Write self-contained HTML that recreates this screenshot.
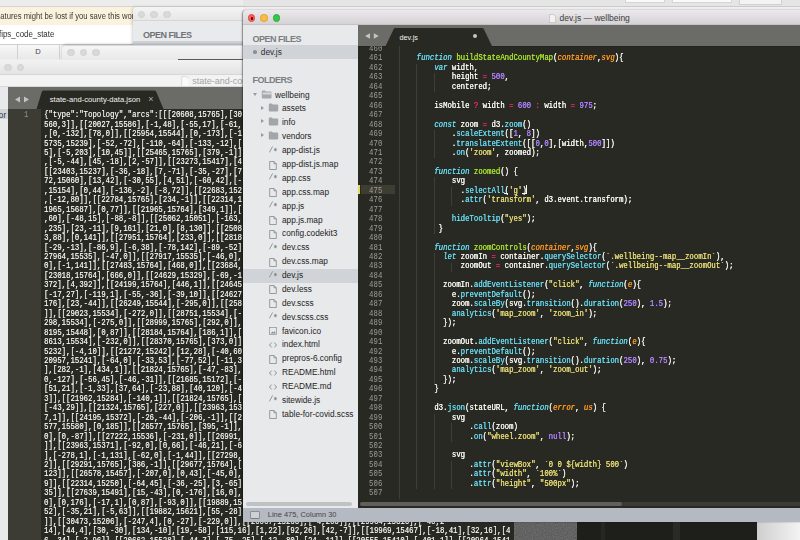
<!DOCTYPE html>
<html><head><meta charset="utf-8">
<style>
*{margin:0;padding:0;box-sizing:border-box}
html,body{width:800px;height:540px;overflow:hidden;background:#2b2b2b;position:relative;font-family:"Liberation Sans",sans-serif}
.abs{position:absolute}
.mono{font-family:"Liberation Mono",monospace}
pre{font-family:"Liberation Mono",monospace;white-space:pre;margin:0}
.tl{position:absolute;width:7.5px;height:7.5px;border-radius:50%}
.tl.g{background:#d9d9d9;border:0.5px solid #d0d0d0}
/* spreadsheet */
#ss{left:0;top:0;width:243px;height:62px;background:#ececec}
/* main window */
#main{left:243px;top:10px;width:560px;height:511.7px;background:#e7e8ea;border-radius:4px 0 0 0;overflow:hidden;box-shadow:-0.8px 0 1.5px rgba(0,0,0,0.45)}
#mtitle{left:0;top:0;width:560px;height:15px;background:linear-gradient(#ebe9eb,#d5d3d5);border-bottom:0.5px solid #c4c2c4}
#sidebar{left:0;top:15px;width:115px;height:483px;background:#e8e9eb;overflow:hidden}
.shead{position:absolute;font-weight:bold;font-size:9px;letter-spacing:-0.5px;color:#7b7d80}
.srow{position:absolute;left:0;width:115px;height:14px}
.srow.sel{background:#d0d3d8}
.sname{position:absolute;top:1.5px;font-size:8.3px;color:#232323;white-space:nowrap}
.icw{position:absolute;top:3px}
.ic{display:block}
.icj{position:absolute;left:0;top:-1.5px;font-family:"Liberation Sans",sans-serif;font-size:7.5px;line-height:8px;color:#6d6f72;white-space:nowrap;letter-spacing:-0.3px}
.tri{position:absolute;top:4.5px;width:0;height:0}
.tri.down{top:5.1px;border-left:2.3px solid transparent;border-right:2.3px solid transparent;border-top:3.2px solid #98999c}
.tri.right{top:3.6px;border-top:2.1px solid transparent;border-bottom:2.1px solid transparent;border-left:3.2px solid #98999c}
#editor{left:115px;top:15px;width:445px;height:483px;background:#282923;overflow:hidden}
#tabbar{left:0;top:0;width:445px;height:20.6px;background:#6b6c67}
#gutter{position:absolute;left:0;top:0;width:24.5px;text-align:right;color:#9d9e98;font-size:8.8px;line-height:9.457px;transform:scaleX(0.8333);transform-origin:100% 0}
#code{position:absolute;left:40.5px;top:0;color:#f8f8f2;text-shadow:0.25px 0 0 currentColor;font-size:8.8px;line-height:9.457px;transform:scaleX(0.8333);transform-origin:0 0}
.guide{position:absolute;width:0.8px;background:#3f3f39}
.k{color:#66d9ef;font-style:italic}
.f{color:#a6e22e}
.p{color:#fd971f;font-style:italic}
.o{color:#f92672}
.n{color:#ae81ff}
.s{color:#e6db74}
.m{color:#66d9ef}
#status{left:0;top:498px;width:560px;height:13.7px;background:#b5b9c1}
/* json window */
#w4{left:0;top:60px;width:513.5px;height:480px;background:#282923;overflow:hidden}
#json{position:absolute;left:44px;top:0;color:#f8f8f2;text-shadow:0.25px 0 0 rgba(248,248,242,0.6);font-size:8.8px;line-height:9.457px;transform:scaleX(0.8333);transform-origin:0 0}
</style></head><body>

<!-- top strip -->
<div class="abs" style="left:0;top:0;width:800px;height:6.5px;background:#e5e5e5;border-bottom:0.7px solid #cacaca"></div>
<div class="abs" style="left:0;top:7px;width:800px;height:4px;background:#efefef"></div>
<div class="abs" style="left:625px;top:0;width:40px;height:2.8px;background:#fafafa;border:0.5px solid #d5d5d5;border-top:0"></div>
<div class="abs" style="left:672px;top:0;width:60px;height:2.8px;background:#fafafa;border:0.5px solid #d5d5d5;border-top:0"></div>
<div class="abs" style="left:739px;top:0;width:43px;height:4.5px;background:#f3f3f3;border:0.5px solid #d0d0d0;border-top:0"></div>
<!-- desktop bottom right -->
<div class="abs" style="left:510px;top:521px;width:290px;height:19px;background:#1e1f1b"></div>
<svg class="abs" style="left:510px;top:521px" width="67" height="19"><filter id="nz"><feTurbulence type="fractalNoise" baseFrequency="0.9" numOctaves="2" seed="3"/><feColorMatrix type="matrix" values="0 0 0 0 0.33  0 0 0 0 0.33  0 0 0 0 0.33  0 0 0 0.5 0"/></filter><rect width="67" height="19" fill="#505050"/><rect width="67" height="19" filter="url(#nz)"/></svg>
<div class="abs" style="left:673px;top:521px;width:7px;height:19px;background:#2a2b27"></div>
<div class="abs" style="left:601px;top:521px;width:4px;height:19px;background:#262622"></div>
<div class="abs" style="left:757px;top:521px;width:43px;height:19px;background:linear-gradient(90deg,#cfcfcf,#f3f3f3)"></div>

<!-- spreadsheet -->
<div id="ss" class="abs">
  <div class="abs" style="left:0;top:0;width:243px;height:6.5px;background:#ececec;border-bottom:0.6px solid #d4d4d4"></div>
  <div class="abs" style="left:0;top:7px;width:243px;height:18px;background:#fbf2dd"></div>
  <div class="abs" style="left:-4px;top:11.3px;font-size:8.4px;color:#3a3833;white-space:nowrap;transform:scaleX(0.915);transform-origin:0 0">eatures might be lost if you save this wor</div>
  <div class="abs" style="left:0;top:25px;width:243px;height:19.5px;background:#ffffff;border-bottom:0.6px solid #cfcfcf"></div>
  <div class="abs" style="left:-1.3px;top:29.3px;font-size:9.3px;color:#303030;white-space:nowrap;transform:scaleX(0.85);transform-origin:0 0">fips_code_state</div>
  <div class="abs" style="left:0;top:45px;width:243px;height:14px;background:linear-gradient(#f7f7f7,#e9e9e9)"></div>
  <div class="abs" style="left:17.3px;top:45px;width:0.6px;height:14px;background:#d0d0d0"></div>
  <div class="abs" style="left:58.5px;top:45px;width:0.6px;height:14px;background:#d0d0d0"></div>
  <div class="abs" style="left:35.3px;top:46.9px;font-size:7.6px;color:#454545">D</div>
</div>

<!-- window 2 -->
<div class="abs" style="left:133px;top:7px;width:112px;height:40px;background:#e9eaec;border-radius:4px 0 0 0;overflow:hidden;box-shadow:-1px 0 3px rgba(0,0,0,0.18)">
  <div class="abs" style="left:0;top:0;width:112px;height:14px;background:linear-gradient(#f4f4f4,#e7e7e7);border-bottom:0.5px solid #d6d6d6"></div>
  <div class="tl g" style="left:4.7px;top:3.7px"></div>
  <div class="tl g" style="left:17.2px;top:3.7px"></div>
  <div class="tl g" style="left:30.2px;top:3.7px"></div>
  <div class="shead" style="left:10px;top:22.7px;color:#707275">OPEN FILES</div>
  <div class="abs" style="left:0;top:34px;width:112px;height:5px;background:#cfd2d7"></div>
</div>

<!-- window 3 -->
<div class="abs" style="left:62px;top:45px;width:183px;height:16px;background:linear-gradient(#f5f5f5,#e8e8e8);border-radius:4px 0 0 0;border-top:0.5px solid #d8d8d8;box-shadow:0 -1px 2.5px rgba(0,0,0,0.2)">
  <div class="tl g" style="left:5.1px;top:2.6px"></div>
  <div class="tl g" style="left:17.8px;top:2.6px"></div>
  <div class="tl g" style="left:30.2px;top:2.6px"></div>
</div>
<div class="abs" style="left:178px;top:58.8px;width:67px;height:1.2px;background:#5a5a58"></div>

<!-- window 4 json -->
<div id="w4" class="abs">
  <div class="abs" style="left:0;top:0;width:520px;height:13.5px;background:linear-gradient(#f2f2f2,#e4e4e4)"></div>
  <div class="tl g" style="left:4.2px;top:3.5px"></div>
  <div class="tl g" style="left:16.7px;top:3.5px"></div>
  <div class="abs" style="left:0;top:13.5px;width:520px;height:13.5px;background:#f3f3f3;border-top:0.6px solid #d6d6d6;border-bottom:0.5px solid #d8d8d8"></div>
  <svg class="abs" style="left:180.5px;top:16px" width="8" height="10" viewBox="0 0 7 9"><path d="M0.5 0.5h4.5l2.5 2.5v6.5h-7z" fill="#fafafa" stroke="#cfcfcf" stroke-width="0.6"/></svg>
  <div class="abs" style="left:192.2px;top:16px;font-size:9px;color:#a3a3a3;white-space:nowrap">state-and-county-data.json</div>
  <div class="abs" style="left:0;top:27px;width:8px;height:453px;background:#e8e9eb"></div>
  <div class="abs" style="left:0;top:48.5px;width:8px;height:10px;background:#d0d3d8"></div>
  <div class="abs" style="left:-1.2px;top:50px;font-size:8.3px;color:#333">or</div>
  <div class="abs" style="left:8px;top:27px;width:512px;height:21.5px;background:#6b6c67"></div>
  <svg class="abs" style="left:8px;top:27px" width="200" height="22"><path d="M28.5 22 L34 4.2 Q34.6 3.6 35.6 3.6 L146.4 3.6 Q147.4 3.6 148 4.2 L155.5 22 Z" fill="#282923"/></svg>
  <svg class="abs" style="left:14.8px;top:35.6px" width="15" height="7" viewBox="0 0 15 7"><path d="M0 3.5L5 0.4V6.6Z M14 3.5L9 0.4V6.6Z" fill="#c3c3bf"/></svg>
  <div class="abs" style="left:49.8px;top:35.2px;font-size:7.65px;color:#f2f2ee;white-space:nowrap">state-and-county-data.json</div>
  <div class="abs" style="left:148.3px;top:34px;font-size:9px;color:#b0b0ad">&#215;</div>
  <div class="abs" style="left:8px;top:48.5px;width:33px;height:433px;background:#3c3b34"></div>
  <pre class="abs" style="left:23.5px;top:51.2px;font-size:8.8px;line-height:9.457px;color:#8f908a;transform:scaleX(0.8333);transform-origin:0 0">1</pre>
  <pre id="json" style="top:51.2px">{&quot;type&quot;:&quot;Topology&quot;,&quot;arcs&quot;:[[[20608,15765],[30
560,3]],[[20027,15586],[-1,48],[-55,17],[-61,
,[0,-132],[78,0]],[[25954,15544],[0,-173],[-1
5735,15239],[-52,-72],[-110,-64],[-133,-12],[
5],[-5,203],[10,45]],[[25465,15765],[379,-1]]
,[-5,-44],[45,-18],[2,-57]],[[23273,15417],[4
[[23403,15237],[-36,-18],[7,-71],[-35,-27],[7
72,15060],[13,42],[-30,55],[4,51],[-60,42],[-
,15154],[0,44],[-136,-2],[-8,72]],[[22683,152
,[-12,80]],[[22784,15765],[234,-1]],[[22314,1
1965,15687],[0,77]],[[21965,15764],[349,1]],[
,60],[-48,15],[-88,-8]],[[25062,15051],[-163,
,235],[23,-11],[9,161],[21,0],[8,130]],[[2508
3,88],[0,141]],[[27951,15764],[233,0]],[[2818
[-29,-13],[-86,9],[-6,38],[-78,142],[-89,-52]
27964,15535],[-47,0]],[[27917,15535],[-46,0],
0],[-1,141]],[[27483,15764],[468,0]],[[23684,
[23018,15764],[666,0]],[[24629,15329],[-69,-1
372],[4,392]],[[24199,15764],[446,1]],[[24645
[-17,27],[-119,1],[-55,-36],[-39,10]],[[24627
176],[23,-44]],[[26249,15544],[-295,0]],[[258
]],[[29023,15534],[-272,0]],[[28751,15534],[-
298,15534],[-275,0]],[[28999,15765],[292,0]],
8195,15448],[0,87]],[[28184,15764],[186,1]],[
8613,15534],[-232,0]],[[28370,15765],[373,0]]
5232],[-4,10]],[[21272,15242],[12,28],[-40,60
20957,15241],[-64,0],[-33,53],[-77,52],[-11,3
],[282,-1],[434,1]],[[21824,15765],[-47,-83],
0,-127],[-56,45],[-46,-31]],[[21685,15172],[-
[51,21],[-1,33],[37,64],[-23,88],[40,120],[-4
3]],[[21962,15284],[-140,1]],[[21824,15765],[
[-43,29]],[[21324,15765],[227,0]],[[23963,153
7,1]],[[24195,15372],[-26,-44],[-206,-1]],[[2
577,15580],[0,185]],[[26577,15765],[395,-1]],
0],[0,-87]],[[27222,15536],[-231,0]],[[26991,
]],[[23963,15371],[-92,0],[0,66],[-46,21],[-6
],[-278,1],[-1,131],[-62,0],[-1,44]],[[27298,
2]],[[29291,15765],[386,-1]],[[29677,15764],[
123]],[[26578,15457],[-207,0],[0,43],[-45,0],
9]],[[22314,15250],[-64,45],[-36,-25],[3,-65]
35]],[[27639,15491],[15,-43],[0,-176],[16,0],
0],[0,176],[-17,1],[0,87],[-93,0]],[[19889,15
52],[-35,21],[-5,63]],[[19882,15621],[55,-28]
]],[[30473,15206],[-247,4],[0,-27],[-229,0]],[[20067,15263],[-4,203]],[[29964,15316],[-40,2
14],[44,4],[30,-30],[134,-10],[19,-58],[115,16],[1,22],[92,26],[42,-7]],[[19969,15467],[-18,41],[32,16],[4
6,-34],[-2,96]],[[20662,15528],[-44,7],[-75,-25],[-12,-80],[24,-11]],[[20555,15410],[-401,1]],[[20964,1541</pre>
</div>

<!-- main window -->
<div id="main" class="abs">
  <div id="mtitle" class="abs">
    <div class="tl" style="left:4.6px;top:4.2px;background:#fc605c;border:0.5px solid #e0443e"><div style="position:absolute;left:2.3px;top:2.3px;width:2.2px;height:2.2px;border-radius:50%;background:#4d0000"></div></div>
    <div class="tl" style="left:17.1px;top:4.2px;background:#fdbc40;border:0.5px solid #dea236"></div>
    <div class="tl" style="left:29.9px;top:4.2px;background:#34c84a;border:0.5px solid #27aa35"></div>
    <svg class="abs" style="left:306px;top:3.5px" width="7" height="9" viewBox="0 0 7 9"><path d="M0.5 0.5h4l2 2v6h-6z" fill="#f2f2f2" stroke="#b8b8b8" stroke-width="0.6"/></svg>
    <div class="abs" style="left:316.6px;top:2.8px;font-size:8.5px;color:#3a3a3a;white-space:nowrap">dev.js — wellbeing</div>
  </div>
  <div id="sidebar" class="abs">
    <div class="shead" style="left:9.6px;top:8.7px">OPEN FILES</div>
    <div class="abs" style="left:0;top:20px;width:115px;height:13.9px;background:#d0d3d8"></div>
    <div class="abs" style="left:10.2px;top:25.3px;width:3.7px;height:3.7px;border-radius:50%;background:#8e8f92"></div>
    <div class="abs" style="left:17.8px;top:22px;font-size:8.3px;color:#2d2d2d">dev.js</div>
    <div class="shead" style="left:9.6px;top:50px">FOLDERS</div>
    <div class="abs" style="left:0;top:0;width:115px;height:483px">
<div class="srow" style="top:63.10px"><span class="tri down" style="left:9.8px"></span><span class="icw" style="left:18px"><svg class="ic" style="margin-top:-0.9px;margin-left:-0.5px" width="12" height="9" viewBox="0 0 12 9"><path d="M0.8 1.4Q0.8 0.5 1.8 0.5H4L5 1.5H9.6Q10.5 1.5 10.5 2.4V7.4Q10.5 8.4 9.5 8.4H1.8Q0.8 8.4 0.8 7.4Z" fill="#a6a8ab"/><path d="M1.6 2.6H9.8L11.2 3.8L10.2 4.6H1.6Z" fill="#d6d7d9"/></svg></span><span class="sname" style="left:32px">wellbeing</span></div>
<div class="srow" style="top:76.98px"><span class="tri right" style="left:17.8px"></span><span class="icw" style="left:26px"><svg class="ic" style="margin-top:-1.6px;margin-left:-1px" width="11" height="9" viewBox="0 0 11 9"><path d="M0.8 1.6Q0.8 0.6 1.8 0.6H3.8L4.8 1.6H9.2Q10.2 1.6 10.2 2.6V7.6Q10.2 8.6 9.2 8.6H1.8Q0.8 8.6 0.8 7.6Z" fill="#a3a5a8"/></svg></span><span class="sname" style="left:39px">assets</span></div>
<div class="srow" style="top:90.86px"><span class="tri right" style="left:17.8px"></span><span class="icw" style="left:26px"><svg class="ic" style="margin-top:-1.6px;margin-left:-1px" width="11" height="9" viewBox="0 0 11 9"><path d="M0.8 1.6Q0.8 0.6 1.8 0.6H3.8L4.8 1.6H9.2Q10.2 1.6 10.2 2.6V7.6Q10.2 8.6 9.2 8.6H1.8Q0.8 8.6 0.8 7.6Z" fill="#a3a5a8"/></svg></span><span class="sname" style="left:39px">info</span></div>
<div class="srow" style="top:104.74px"><span class="tri right" style="left:17.8px"></span><span class="icw" style="left:26px"><svg class="ic" style="margin-top:-1.6px;margin-left:-1px" width="11" height="9" viewBox="0 0 11 9"><path d="M0.8 1.6Q0.8 0.6 1.8 0.6H3.8L4.8 1.6H9.2Q10.2 1.6 10.2 2.6V7.6Q10.2 8.6 9.2 8.6H1.8Q0.8 8.6 0.8 7.6Z" fill="#a3a5a8"/></svg></span><span class="sname" style="left:39px">vendors</span></div>
<div class="srow" style="top:118.62px"><span class="icw" style="left:26px"><svg class="ic" style="margin-top:-1px" width="9" height="7" viewBox="0 0 9 7"><path d="M0.4 6.4L3.6 0.4 M6.4 1.9v3.4 M4.9 2.75l3 1.7 M4.9 4.45l3-1.7" fill="none" stroke="#76787b" stroke-width="0.7"/></svg></span><span class="sname" style="left:39px">app-dist.js</span></div>
<div class="srow" style="top:132.50px"><span class="icw" style="left:26px"><svg class="ic" width="8" height="9" viewBox="0 0 8 9"><path d="M0.7 0.5h4.3l2.3 2.3v5.7h-6.6z M5 0.5v2.3h2.3" fill="none" stroke="#7e8083" stroke-width="0.75"/></svg></span><span class="sname" style="left:39px">app-dist.js.map</span></div>
<div class="srow" style="top:146.38px"><span class="icw" style="left:26px"><svg class="ic" style="margin-top:-1px" width="9" height="7" viewBox="0 0 9 7"><path d="M0.4 6.4L3.6 0.4 M6.4 1.9v3.4 M4.9 2.75l3 1.7 M4.9 4.45l3-1.7" fill="none" stroke="#76787b" stroke-width="0.7"/></svg></span><span class="sname" style="left:39px">app.css</span></div>
<div class="srow" style="top:160.26px"><span class="icw" style="left:26px"><svg class="ic" width="8" height="9" viewBox="0 0 8 9"><path d="M0.7 0.5h4.3l2.3 2.3v5.7h-6.6z M5 0.5v2.3h2.3" fill="none" stroke="#7e8083" stroke-width="0.75"/></svg></span><span class="sname" style="left:39px">app.css.map</span></div>
<div class="srow" style="top:174.14px"><span class="icw" style="left:26px"><svg class="ic" style="margin-top:-1px" width="9" height="7" viewBox="0 0 9 7"><path d="M0.4 6.4L3.6 0.4 M6.4 1.9v3.4 M4.9 2.75l3 1.7 M4.9 4.45l3-1.7" fill="none" stroke="#76787b" stroke-width="0.7"/></svg></span><span class="sname" style="left:39px">app.js</span></div>
<div class="srow" style="top:188.02px"><span class="icw" style="left:26px"><svg class="ic" width="8" height="9" viewBox="0 0 8 9"><path d="M0.7 0.5h4.3l2.3 2.3v5.7h-6.6z M5 0.5v2.3h2.3" fill="none" stroke="#7e8083" stroke-width="0.75"/></svg></span><span class="sname" style="left:39px">app.js.map</span></div>
<div class="srow" style="top:201.90px"><span class="icw" style="left:26px"><svg class="ic" width="8" height="9" viewBox="0 0 8 9"><path d="M0.7 0.5h4.3l2.3 2.3v5.7h-6.6z M5 0.5v2.3h2.3" fill="none" stroke="#7e8083" stroke-width="0.75"/></svg></span><span class="sname" style="left:39px">config.codekit3</span></div>
<div class="srow" style="top:215.78px"><span class="icw" style="left:26px"><svg class="ic" style="margin-top:-1px" width="9" height="7" viewBox="0 0 9 7"><path d="M0.4 6.4L3.6 0.4 M6.4 1.9v3.4 M4.9 2.75l3 1.7 M4.9 4.45l3-1.7" fill="none" stroke="#76787b" stroke-width="0.7"/></svg></span><span class="sname" style="left:39px">dev.css</span></div>
<div class="srow" style="top:229.66px"><span class="icw" style="left:26px"><svg class="ic" width="8" height="9" viewBox="0 0 8 9"><path d="M0.7 0.5h4.3l2.3 2.3v5.7h-6.6z M5 0.5v2.3h2.3" fill="none" stroke="#7e8083" stroke-width="0.75"/></svg></span><span class="sname" style="left:39px">dev.css.map</span></div>
<div class="srow sel" style="top:243.54px"><span class="icw" style="left:26px"><svg class="ic" style="margin-top:-1px" width="9" height="7" viewBox="0 0 9 7"><path d="M0.4 6.4L3.6 0.4 M6.4 1.9v3.4 M4.9 2.75l3 1.7 M4.9 4.45l3-1.7" fill="none" stroke="#76787b" stroke-width="0.7"/></svg></span><span class="sname" style="left:39px">dev.js</span></div>
<div class="srow" style="top:257.42px"><span class="icw" style="left:26px"><svg class="ic" width="8" height="9" viewBox="0 0 8 9"><path d="M0.7 0.5h4.3l2.3 2.3v5.7h-6.6z M5 0.5v2.3h2.3" fill="none" stroke="#7e8083" stroke-width="0.75"/></svg></span><span class="sname" style="left:39px">dev.less</span></div>
<div class="srow" style="top:271.30px"><span class="icw" style="left:26px"><svg class="ic" width="8" height="9" viewBox="0 0 8 9"><path d="M0.7 0.5h4.3l2.3 2.3v5.7h-6.6z M5 0.5v2.3h2.3" fill="none" stroke="#7e8083" stroke-width="0.75"/></svg></span><span class="sname" style="left:39px">dev.scss</span></div>
<div class="srow" style="top:285.18px"><span class="icw" style="left:26px"><svg class="ic" style="margin-top:-1px" width="9" height="7" viewBox="0 0 9 7"><path d="M0.4 6.4L3.6 0.4 M6.4 1.9v3.4 M4.9 2.75l3 1.7 M4.9 4.45l3-1.7" fill="none" stroke="#76787b" stroke-width="0.7"/></svg></span><span class="sname" style="left:39px">dev.scss.css</span></div>
<div class="srow" style="top:299.06px"><span class="icw" style="left:26px"><svg class="ic" width="8" height="8" viewBox="0 0 8 8"><rect x="0.5" y="0.5" width="7" height="7" fill="none" stroke="#8a8c8f" stroke-width="0.7"/><path d="M1.5 6.5l2-2 1 1 1.5-1.5 0.5 2.5z" fill="#8a8c8f"/></svg></span><span class="sname" style="left:39px">favicon.ico</span></div>
<div class="srow" style="top:312.94px"><span class="icw" style="left:26px"><svg class="ic" style="margin-top:1px" width="8" height="6" viewBox="0 0 8 6"><path d="M2.6 0.6L0.5 3L2.6 5.4 M5.4 0.6L7.5 3L5.4 5.4" fill="none" stroke="#6f7174" stroke-width="0.75"/></svg></span><span class="sname" style="left:39px">index.html</span></div>
<div class="srow" style="top:326.82px"><span class="icw" style="left:26px"><svg class="ic" width="8" height="9" viewBox="0 0 8 9"><path d="M0.7 0.5h4.3l2.3 2.3v5.7h-6.6z M5 0.5v2.3h2.3" fill="none" stroke="#7e8083" stroke-width="0.75"/></svg></span><span class="sname" style="left:39px">prepros-6.config</span></div>
<div class="srow" style="top:340.70px"><span class="icw" style="left:26px"><svg class="ic" style="margin-top:1px" width="8" height="6" viewBox="0 0 8 6"><path d="M2.6 0.6L0.5 3L2.6 5.4 M5.4 0.6L7.5 3L5.4 5.4" fill="none" stroke="#6f7174" stroke-width="0.75"/></svg></span><span class="sname" style="left:39px">README.html</span></div>
<div class="srow" style="top:354.58px"><span class="icw" style="left:26px"><svg class="ic" style="margin-top:1px" width="8" height="6" viewBox="0 0 8 6"><path d="M2.6 0.6L0.5 3L2.6 5.4 M5.4 0.6L7.5 3L5.4 5.4" fill="none" stroke="#6f7174" stroke-width="0.75"/></svg></span><span class="sname" style="left:39px">README.md</span></div>
<div class="srow" style="top:368.46px"><span class="icw" style="left:26px"><svg class="ic" style="margin-top:-1px" width="9" height="7" viewBox="0 0 9 7"><path d="M0.4 6.4L3.6 0.4 M6.4 1.9v3.4 M4.9 2.75l3 1.7 M4.9 4.45l3-1.7" fill="none" stroke="#76787b" stroke-width="0.7"/></svg></span><span class="sname" style="left:39px">sitewide.js</span></div>
<div class="srow" style="top:382.34px"><span class="icw" style="left:26px"><svg class="ic" width="8" height="9" viewBox="0 0 8 9"><path d="M0.7 0.5h4.3l2.3 2.3v5.7h-6.6z M5 0.5v2.3h2.3" fill="none" stroke="#7e8083" stroke-width="0.75"/></svg></span><span class="sname" style="left:39px">table-for-covid.scss</span></div>
    </div>
    <div class="abs" style="left:2.5px;top:477px;width:106.5px;height:3.8px;border-radius:2px;background:#bfc1c5"></div>
  </div>
  <div id="editor" class="abs">
    <div id="tabbar" class="abs">
      <svg class="abs" style="left:0;top:0" width="445" height="21"><path d="M27.6 21 L36 3.5 Q36.5 3 37.5 3 L124 3 Q125 3 125.5 3.5 L134 21 Z" fill="#282923"/></svg>
      <svg class="abs" style="left:7px;top:7.8px" width="14" height="6" viewBox="0 0 14 6"><path d="M0 3L5 0.2V5.8Z M13.8 3L8.8 0.2V5.8Z" fill="#c3c3bf"/></svg>
      <div class="abs" style="left:41.5px;top:7.5px;font-size:7.3px;color:#f2f2ee">dev.js</div>
      <div class="abs" style="left:114.5px;top:8.5px;width:4.5px;height:4.5px;border-radius:50%;background:#c5c5c1"></div>
    </div>
    <div class="abs" style="left:134px;top:20.6px;width:311px;height:1px;background:#22231f"></div><div class="abs" style="left:0;top:20.6px;width:27.6px;height:1px;background:#22231f"></div>
    <div class="abs" style="left:0;top:20.6px;width:445px;height:453.9px;overflow:hidden">
      <div class="abs" style="left:3px;top:139px;width:34px;height:9.3px;background:#3e3d32"></div>
      <div class="abs" style="left:0;top:139px;width:1.9px;height:9.3px;background:#e6d85a"></div>
      <div class="abs" style="left:168.2px;top:139.5px;width:0.7px;height:8.5px;background:#f8f8f0"></div>
      <div class="abs" style="left:146.1px;top:147px;width:4px;height:0.6px;background:#f8f8f2"></div>
      <div class="abs" style="left:163.8px;top:147px;width:4px;height:0.6px;background:#f8f8f2"></div>
      <div class="guide" style="left:40.50px;top:-0.60px;height:463.39px"></div>
<div class="guide" style="left:58.10px;top:18.31px;height:425.57px"></div>
<div class="guide" style="left:75.70px;top:27.77px;height:18.91px"></div>
<div class="guide" style="left:75.70px;top:84.51px;height:28.37px"></div>
<div class="guide" style="left:75.70px;top:131.80px;height:56.74px"></div>
<div class="guide" style="left:75.70px;top:207.45px;height:132.40px"></div>
<div class="guide" style="left:75.70px;top:368.22px;height:75.66px"></div>
<div class="guide" style="left:93.30px;top:141.26px;height:18.91px"></div>
<div class="guide" style="left:93.30px;top:216.91px;height:9.46px"></div>
<div class="guide" style="left:93.30px;top:377.68px;height:18.91px"></div>
<div class="guide" style="left:93.30px;top:415.51px;height:28.37px"></div>
      <pre id="gutter" style="top:-0.6px;left:0;width:24.3px">460
461
462
463
464
465
466
467
468
469
470
471
472
473
474
475
476
477
478
479
480
481
482
483
484
485
486
487
488
489
490
491
492
493
494
495
496
497
498
499
500
501
502
503
504
505
506
507
508</pre>
      <pre id="code" style="top:-0.6px"> 
    <span class="k">function</span> <span class="f">buildStateAndCountyMap</span>(<span class="p">container</span>,<span class="p">svg</span>){
        <span class="k">var</span> width,
            height <span class="o">=</span> <span class="n">500</span>,
            centered;
 
        isMobile <span class="o">?</span> width <span class="o">=</span> <span class="n">600</span> <span class="o">:</span> width <span class="o">=</span> <span class="n">975</span>;
 
        <span class="k">const</span> zoom <span class="o">=</span> d3.<span class="m">zoom</span>()
            .<span class="m">scaleExtent</span>([<span class="n">1</span>, <span class="n">8</span>])
            .<span class="m">translateExtent</span>([[<span class="n">0</span>,<span class="n">0</span>],[width,<span class="n">500</span>]])
            .<span class="m">on</span>(<span class="s">&#x27;zoom&#x27;</span>, zoomed);
 
        <span class="k">function</span> <span class="f">zoomed</span>() {
            svg
              .<span class="m">selectAll</span>(<span class="s">&#x27;g&#x27;</span>)
              .<span class="m">attr</span>(<span class="s">&#x27;transform&#x27;</span>, d3.event.transform);
 
            <span class="m">hideTooltip</span>(<span class="s">&quot;yes&quot;</span>);
         }
 
        <span class="k">function</span> <span class="f">zoomControls</span>(<span class="p">container</span>,<span class="p">svg</span>){
          <span class="k">let</span> zoomIn <span class="o">=</span> container.<span class="m">querySelector</span>(<span class="s">`.wellbeing--map__zoomIn`</span>),
              zoomOut <span class="o">=</span> container.<span class="m">querySelector</span>(<span class="s">`.wellbeing--map__zoomOut`</span>);
 
          zoomIn.<span class="m">addEventListener</span>(<span class="s">&quot;click&quot;</span>, <span class="k">function</span>(<span class="p">e</span>){
            e.<span class="m">preventDefault</span>();
            zoom.<span class="m">scaleBy</span>(svg.<span class="m">transition</span>().<span class="m">duration</span>(<span class="n">250</span>), <span class="n">1.5</span>);
            <span class="m">analytics</span>(<span class="s">&#x27;map_zoom&#x27;</span>, <span class="s">&#x27;zoom_in&#x27;</span>);
          });
 
          zoomOut.<span class="m">addEventListener</span>(<span class="s">&quot;click&quot;</span>, <span class="k">function</span>(<span class="p">e</span>){
            e.<span class="m">preventDefault</span>();
            zoom.<span class="m">scaleBy</span>(svg.<span class="m">transition</span>().<span class="m">duration</span>(<span class="n">250</span>), <span class="n">0.75</span>);
            <span class="m">analytics</span>(<span class="s">&#x27;map_zoom&#x27;</span>, <span class="s">&#x27;zoom_out&#x27;</span>);
          });
        }
 
        d3.<span class="m">json</span>(stateURL, <span class="k">function</span>(<span class="p">error</span>, <span class="p">us</span>) {
            svg
                .<span class="m">call</span>(zoom)
                .<span class="m">on</span>(<span class="s">&quot;wheel.zoom&quot;</span>, <span class="n">null</span>);
 
            svg
                .<span class="m">attr</span>(<span class="s">&quot;viewBox&quot;</span>, <span class="s">`0 0 ${width} 500`</span>)
                .<span class="m">attr</span>(<span class="s">&quot;width&quot;</span>, <span class="s">`100%`</span>)
                .<span class="m">attr</span>(<span class="s">&quot;height&quot;</span>, <span class="s">&quot;500px&quot;</span>);
 
 </pre>
    </div>
  </div>
  <div class="abs" style="left:117px;top:491.7px;width:445px;height:4.4px;border-radius:2.2px;background:#3a3b35"></div>
  <div class="abs" style="left:117px;top:491.7px;width:262px;height:4.4px;border-radius:2.2px;background:#5f605b"></div>
  <div id="status" class="abs">
    <div class="abs" style="left:7px;top:3px;width:10px;height:7.5px;border:0.8px solid #8a8e94;border-bottom:1.6px solid #7a7e84;border-radius:1.2px;background:#cdd0d5"></div>
    <div class="abs" style="left:24.8px;top:2.4px;font-size:7.45px;color:#45474b;white-space:nowrap">Line 475, Column 30</div>
  </div>
</div>
</body></html>
